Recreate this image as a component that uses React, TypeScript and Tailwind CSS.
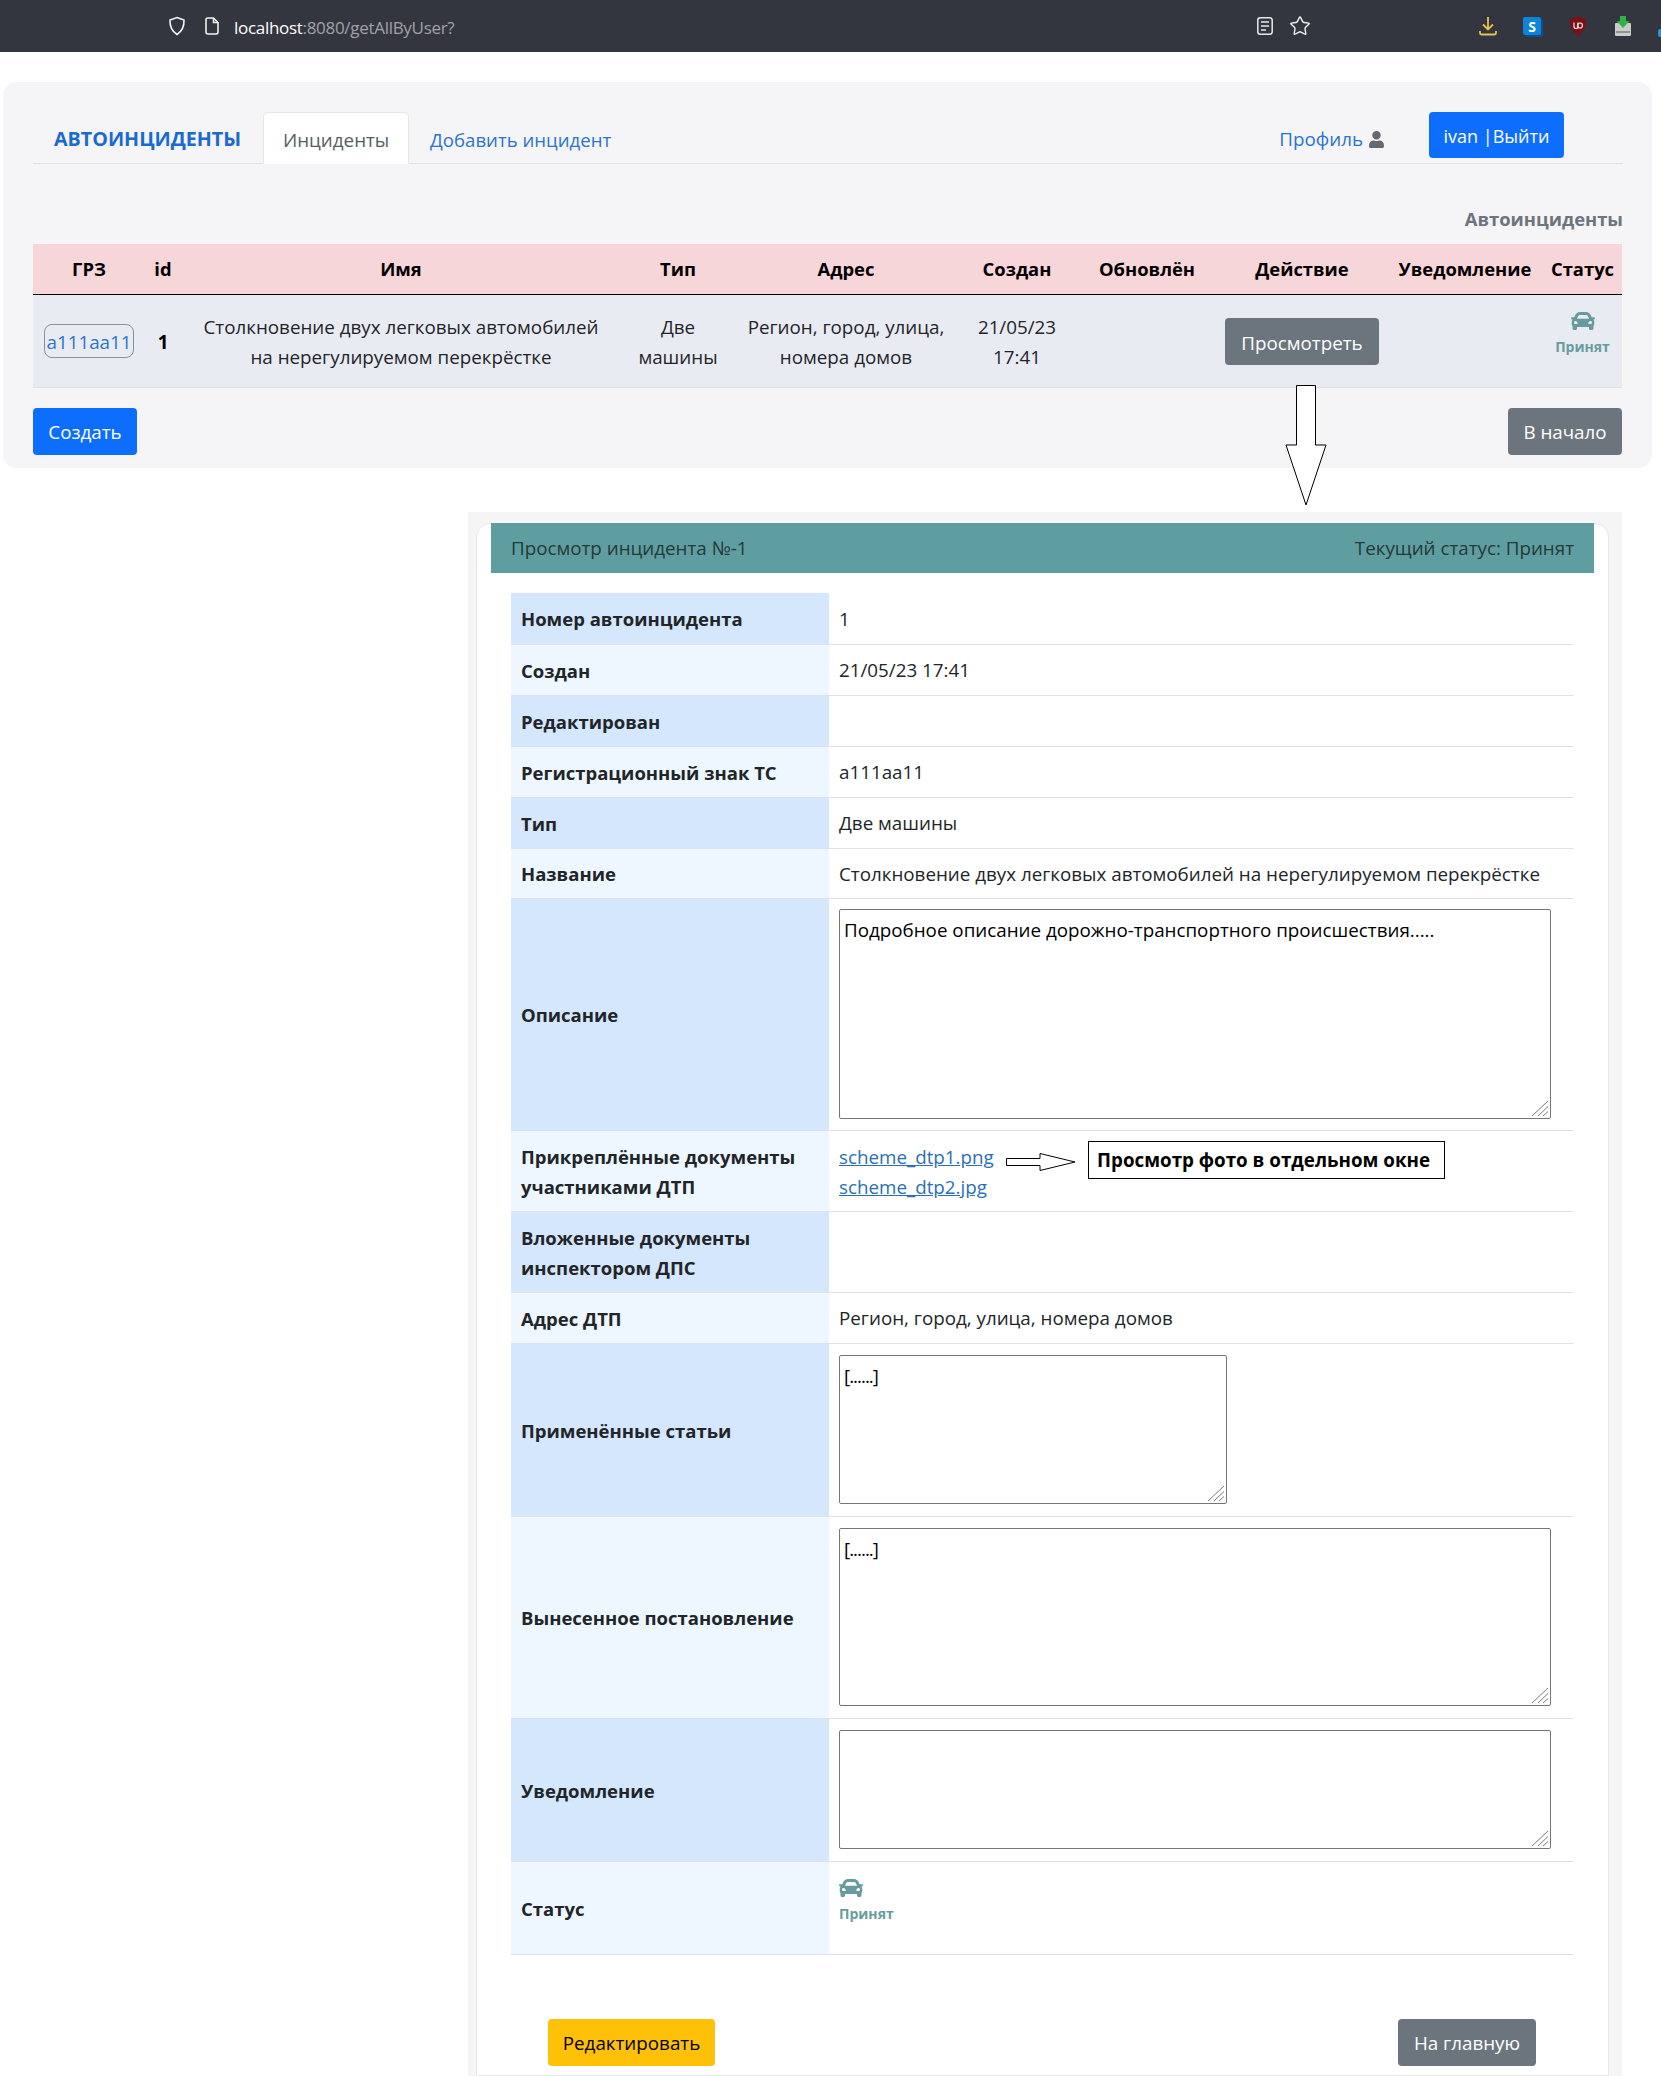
import { FaCar, FaUser } from 'react-icons/fa';
import { Star } from 'lucide-react';

const headers: [string, string][] = [
  ['ГРЗ', 'w-[112px]'],
  ['id', 'w-[36px]'],
  ['Имя', 'w-[440px]'],
  ['Тип', 'w-[114px]'],
  ['Адрес', 'w-[222px]'],
  ['Создан', 'w-[120px]'],
  ['Обновлён', 'w-[140px]'],
  ['Действие', 'w-[170px]'],
  ['Уведомление', 'w-[156px]'],
  ['Статус', 'w-[79px]'],
];

function BrowserBar() {
  return (
    <div className="flex h-[52px] items-center bg-[#33363f] text-white">
      <svg className="ml-[168px] h-[20px] w-[18px]" viewBox="0 0 18 20" fill="none" stroke="#f2f2f2" strokeWidth="1.6">
        <path d="M9 1.500 16 4c.3 6.500-1.600 11-7 14.500C3.600 15 1.700 10.500 2 4z" />
      </svg>
      <svg className="ml-[19px] h-[18px] w-[14px]" viewBox="0 0 14 18" fill="none" stroke="#f2f2f2" strokeWidth="1.6">
        <path d="M2.500 1h6L13 5.500V15a2 2 0 0 1-2 2H3a2 2 0 0 1-2-2V2.500A1.500 1.500 0 0 1 2.500 1z" />
        <path d="M8.500 1v4.500H13" />
      </svg>
      <span className="ml-[15px] pt-[3px] text-[17px] tracking-[-0.3px]">
        localhost<span className="text-[#a0a2a8]">:8080/getAllByUser?</span>
      </span>
      <div className="ml-auto flex items-center">
        <svg className="h-[18px] w-[16px]" viewBox="0 0 16 18" fill="none" stroke="#e8e8e8" strokeWidth="1.500">
          <rect x=".8" y=".8" width="14.400" height="16.400" rx="2.500" />
          <path d="M4 5h8M4 9h8M4 13h5" />
        </svg>
        <Star className="ml-[16px] h-[22px] w-[22px]" strokeWidth={1.5} color="#f2f2f2" />
        <svg className="ml-[168px] h-[20px] w-[18px]" viewBox="0 0 18 20" fill="none" stroke="#e7c14f" strokeWidth="1.800">
          <path d="M9 1v12M4 8.500 9 13.500l5-5M1 15v2a1.500 1.500 0 0 0 1.500 1.500h13A1.500 1.500 0 0 0 17 17v-2" />
        </svg>
        <span className="ml-[26px] flex h-[18px] w-[18px] items-center justify-center rounded-[2px] bg-[#0d84d8] text-[14px] font-bold text-white shadow-[2px_2px_0_#0a4f8c]">
          S
        </span>
        <svg className="ml-[28px] h-[20px] w-[18px]" viewBox="0 0 18 20" fill="none">
          <path d="M9 .5 17 3c.3 7-1.700 12.500-8 16.500C2.700 15.500.7 10 1 3z" fill="#7d0f17" />
          <path d="M5 6.500v4a2 2 0 0 0 4 0v-4" stroke="#f4e2e2" strokeWidth="1.200" />
          <circle cx="11" cy="9.500" r="2.500" stroke="#f4e2e2" strokeWidth="1.200" />
        </svg>
        <svg className="ml-[28px] h-[20px] w-[16px]" viewBox="0 0 16 20">
          <rect y="7" width="16" height="13" rx="1" fill="#c9cdc9" />
          <rect x="1" y="15" width="14" height="2" fill="#8f938f" />
          <path d="M5 0h6v5h3.500L8 12 1.500 5H5z" fill="#2fb344" />
        </svg>
        <div className="mt-[13px] ml-[27px] h-[8px] w-[3px] rounded-l-[2px] bg-[#2f8fd8]" />
      </div>
    </div>
  );
}

function IncidentsPanel() {
  return (
    <div className="mx-[3px] mt-[30px] h-[386px] w-[1649px] rounded-[14px] bg-[#f5f4f6] px-[30px] pt-[30px]">
      <div className="mr-[-1px] flex h-[52px] items-stretch border-b border-[#dee2e6] text-[18.800px]">
        <a className="mt-[12px] ml-[21px] text-[19.700px] font-bold text-[#1a6bd0]">АВТОИНЦИДЕНТЫ</a>
        <a className="mb-[-1px] ml-[22px] flex w-[146px] items-center justify-center rounded-t-[5px] border border-b-0 border-[#e4e6ea] bg-white pt-[4px] text-[#565e64]">
          Инциденты
        </a>
        <a className="ml-[21px] flex items-center pt-[4px] text-[18.600px] text-[#2a75d0]">Добавить инцидент</a>
        <a className="ml-auto flex items-center pt-[4px] text-[#2a75d0]">
          Профиль
          <FaUser className="ml-[6px] h-[17px] w-[15px] text-[#666a70]" />
        </a>
        <button className="mr-[59px] ml-[45px] h-[46px] w-[135px] rounded-[4px] bg-[#0d6efd] pt-[3px] text-[18px] text-white">
          ivan |Выйти
        </button>
      </div>
      <div className="mt-[41px] mr-[-1px] text-right text-[18.400px] leading-[28px] font-bold text-[#6c757d]">
        Автоинциденты
      </div>
      <table className="mt-[11px] w-[1589px] table-fixed border-collapse text-[18.800px] text-[#212529]">
        <thead>
          <tr className="h-[50px] border-b border-black bg-[#f7d6d9] text-[18.400px] text-black">
            {headers.map(([h, w]) => (
              <th key={h} className={`${w} p-0 pt-[1px] text-center font-bold`}>
                {h}
              </th>
            ))}
          </tr>
        </thead>
        <tbody>
          <tr className="h-[93px] border-b border-[#dee2e6] bg-[#e9ebf2] text-center leading-[30px]">
            <td className="p-0 pt-[1px]">
              <a className="mx-auto block h-[34px] w-[90px] rounded-[8px] border border-[#8a9099] pt-[1px] leading-[32px] text-[#2a75d0]">
                a111aa11
              </a>
            </td>
            <td className="p-0 pt-[2px] font-bold text-black">1</td>
            <td className="p-0 pt-[2px]">
              Столкновение двух легковых автомобилей
              <br />
              на нерегулируемом перекрёстке
            </td>
            <td className="p-0 pt-[2px]">
              Две
              <br />
              машины
            </td>
            <td className="p-0 pt-[2px]">
              Регион, город, улица,
              <br />
              номера домов
            </td>
            <td className="p-0 pt-[2px]">
              21/05/23
              <br />
              17:41
            </td>
            <td className="p-0" />
            <td className="p-0 pt-[2px]">
              <button className="h-[47px] w-[154px] rounded-[4px] bg-[#6c757d] pt-[2px] text-white">Просмотреть</button>
            </td>
            <td className="p-0" />
            <td className="p-0">
              <div className="pb-[17px]">
                <FaCar className="mx-auto h-[24px] w-[24px] text-[#679c9e]" />
                <div className="mt-[5px] text-[14px] leading-[18px] font-bold text-[#679c9e]">Принят</div>
              </div>
            </td>
          </tr>
        </tbody>
      </table>
      <div className="mt-[20px] flex justify-between text-[18.800px] text-white">
        <button className="h-[47px] w-[104px] rounded-[4px] bg-[#0d6efd] pt-[2px]">Создать</button>
        <button className="h-[47px] w-[114px] rounded-[4px] bg-[#6c757d] pt-[2px]">В начало</button>
      </div>
    </div>
  );
}

function Area({ value, className, dots }: { value: string; className: string; dots?: boolean }) {
  return (
    <div className={`relative ${className}`}>
      <textarea
        readOnly
        defaultValue={value}
        className={`block h-full w-full resize-none rounded-[2px] border border-[#767676] bg-white px-[4px] py-[7px] leading-[26px] text-black ${
          dots ? 'tracking-[-1px]' : ''
        }`}
      />
      <svg className="absolute right-[2px] bottom-[2px] h-[17px] w-[18px]" viewBox="0 0 18 17" stroke="#7a7a7a" strokeWidth="1">
        <path d="M1 16 17 1M7 16 17 6.500M12 16l5-4.500" />
      </svg>
    </div>
  );
}

function StatusCar() {
  return (
    <div className="pb-[16px]">
      <FaCar className="h-[24px] w-[24px] text-[#679c9e]" />
      <div className="mt-[5px] text-[14px] leading-[18px] font-bold text-[#679c9e]">Принят</div>
    </div>
  );
}

const rows: { label: React.ReactNode; h: string; value?: React.ReactNode }[] = [
  { label: 'Номер автоинцидента', h: 'h-[51px]', value: '1' },
  { label: 'Создан', h: 'h-[51px]', value: '21/05/23 17:41' },
  { label: 'Редактирован', h: 'h-[51px]' },
  { label: 'Регистрационный знак ТС', h: 'h-[51px]', value: 'a111aa11' },
  { label: 'Тип', h: 'h-[51px]', value: 'Две машины' },
  { label: 'Название', h: 'h-[50px]', value: 'Столкновение двух легковых автомобилей на нерегулируемом перекрёстке' },
  {
    label: 'Описание',
    h: 'h-[232px]',
    value: (
      <Area
        value="Подробное описание дорожно-транспортного происшествия....."
        className="h-[210px] w-[712px]"
      />
    ),
  },
  {
    label: (
      <>
        Прикреплённые документы
        <br />
        участниками ДТП
      </>
    ),
    h: 'h-[81px]',
    value: (
      <div className="flex items-start">
        <div className="w-[167px] pt-[3px] leading-[30px] text-[#2a6fb5] underline">
          <a>scheme_dtp1.png</a>
          <br />
          <a>scheme_dtp2.jpg</a>
        </div>
        <svg className="mt-[14px] h-[18px] w-[70px]" viewBox="0 0 70 18" fill="white" stroke="black" strokeWidth="1">
          <path d="M.5 5.500H34V.5L69 9 34 17.500V12.500H.5z" />
        </svg>
        <div className="mt-[2px] ml-[12px] flex h-[38px] w-[357px] items-center border border-black bg-white pt-[1px] pl-[8px] font-bold text-black">
          Просмотр фото в отдельном окне
        </div>
      </div>
    ),
  },
  {
    label: (
      <>
        Вложенные документы
        <br />
        инспектором ДПС
      </>
    ),
    h: 'h-[81px]',
  },
  { label: 'Адрес ДТП', h: 'h-[51px]', value: 'Регион, город, улица, номера домов' },
  { label: 'Применённые статьи', h: 'h-[173px]', value: <Area dots value="[......]" className="h-[149px] w-[388px]" /> },
  { label: 'Вынесенное постановление', h: 'h-[202px]', value: <Area dots value="[......]" className="h-[178px] w-[712px]" /> },
  { label: 'Уведомление', h: 'h-[143px]', value: <Area value="" className="h-[119px] w-[712px]" /> },
  { label: 'Статус', h: 'h-[93px]', value: <StatusCar /> },
];

function IncidentView() {
  return (
    <div className="mt-[44px] ml-[468px] h-[1564px] w-[1154px] bg-[#f5f5f5] px-[8px] pt-[11px]">
      <div className="h-full w-[1133px] rounded-t-[14px] border border-[#e8e8ea] bg-white px-[14px]">
        <div className="mt-[-1px] flex h-[50px] items-center justify-between bg-[#5f9ea0] px-[20px] pt-[1px] text-[18.800px] text-[#24393a]">
          <span>Просмотр инцидента №-1</span>
          <span>Текущий статус: Принят</span>
        </div>
        <table className="mt-[20px] ml-[20px] w-[1062px] table-fixed border-collapse text-[18.800px] text-[#212529]">
          <tbody>
            {rows.map((r, i) => (
              <tr key={i} className={`${r.h} border-b border-[#dee2e6]`}>
                <td
                  className={`w-[318px] px-[10px] pt-[2px] pb-0 text-[18.500px] leading-[30px] font-bold ${
                    i % 2 === 0 ? 'bg-[#d5e7fd]' : 'bg-[#eef7ff]'
                  }`}
                >
                  {r.label}
                </td>
                <td className={`px-[10px] pb-0 ${typeof r.value === 'string' ? 'pt-[2px]' : 'pt-0'}`}>{r.value}</td>
              </tr>
            ))}
          </tbody>
        </table>
        <div className="mt-[64px] flex justify-between pr-[58px] pl-[57px] text-[18.800px]">
          <button className="h-[47px] w-[167px] rounded-[4px] bg-[#ffc107] pt-[2px] text-black">Редактировать</button>
          <button className="h-[47px] w-[138px] rounded-[4px] bg-[#6c757d] pt-[2px] text-white">На главную</button>
        </div>
      </div>
    </div>
  );
}

export default function App() {
  return (
    <div className="relative h-[2076px] w-[1661px] overflow-hidden bg-white font-['Open_Sans','Noto_Sans',sans-serif]">
      <BrowserBar />
      <IncidentsPanel />
      <IncidentView />
      {/* стрелка от кнопки к карточке */}
      <svg className="absolute top-[385px] left-[1285px] h-[121px] w-[42px]" viewBox="0 0 42 121" fill="white" stroke="black" strokeWidth="1">
        <path d="M11.500.5H30.500V60H41L21 120 1 60H11.500z" />
      </svg>
    </div>
  );
}
